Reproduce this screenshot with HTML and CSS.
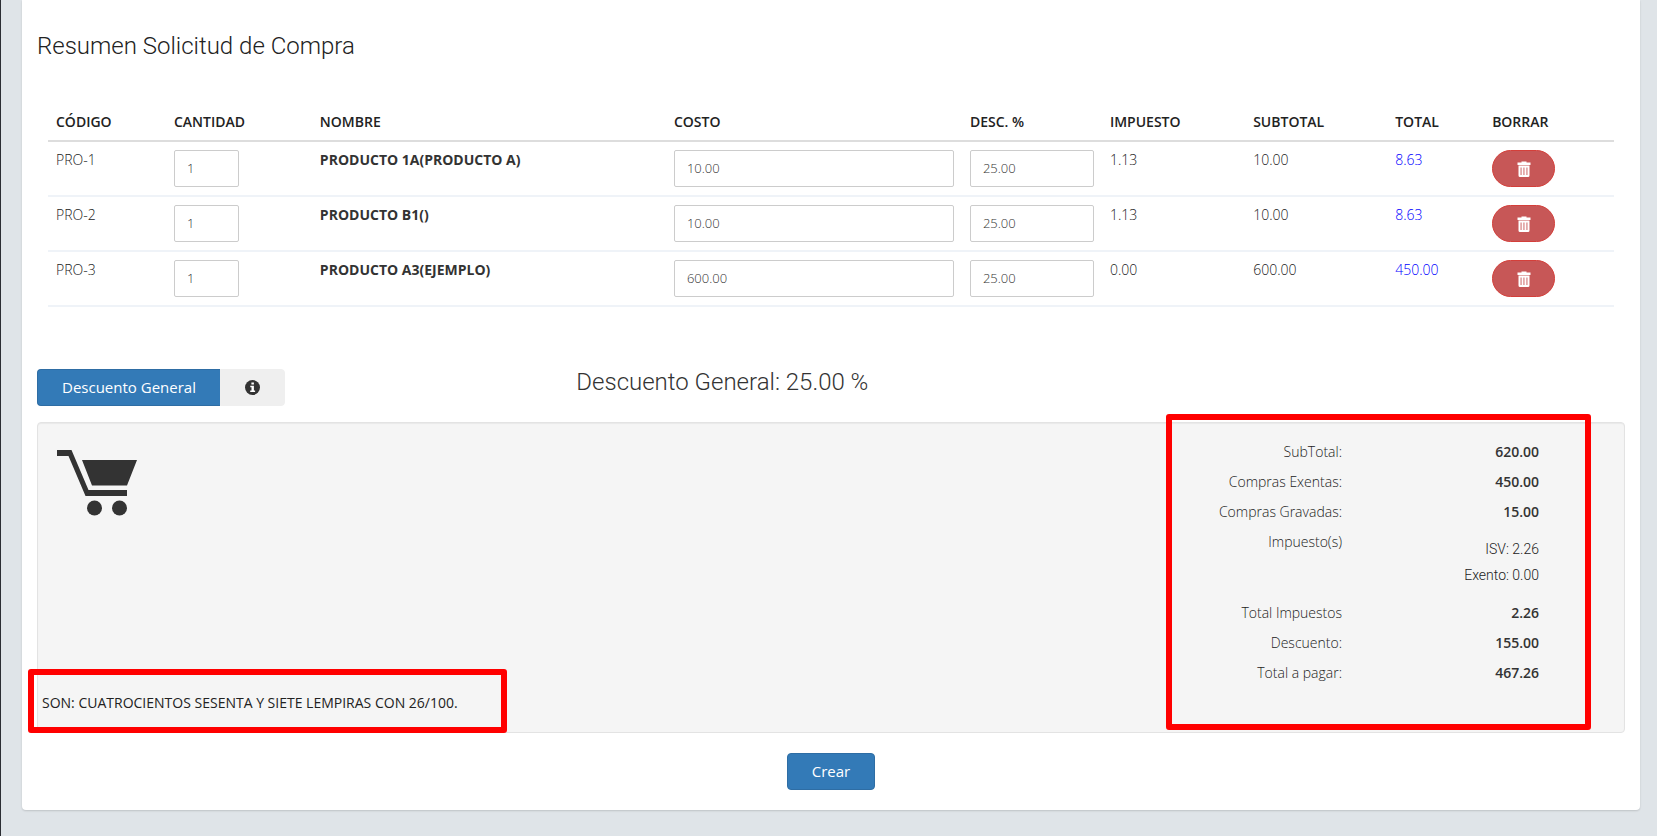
FILE: index.html
```html
<!DOCTYPE html>
<html lang="es">
<head>
<meta charset="utf-8">
<title>Resumen Solicitud de Compra</title>
<link rel="stylesheet" href="styles.css">
</head>
<body>
<svg class="sprite" aria-hidden="true">
  <symbol id="trash" viewBox="0 0 14 16">
    <path fill="currentColor" fill-rule="evenodd" d="M4.500 0.500h5v1h4v2.500h-13v-2.500h4zM1.500 4.600h11v9.900q0 1.500-1.500 1.500h-8q-1.500 0-1.500-1.500zM3.600 6.500v7.500h0.900v-7.500zM6.500 6.500v7.500h0.900v-7.500zM9.500 6.500v7.500h0.900v-7.500z"/>
  </symbol>
</svg>
<main class="card">
  <h1 class="title">Resumen Solicitud de Compra</h1>

  <div class="table-wrap">
    <table class="items">
      <colgroup>
        <col class="c-code"><col class="c-qty"><col class="c-name"><col class="c-cost"><col class="c-disc"><col class="c-tax"><col class="c-sub"><col class="c-total"><col class="c-del">
      </colgroup>
      <thead>
        <tr><th>CÓDIGO</th><th>CANTIDAD</th><th>NOMBRE</th><th>COSTO</th><th>DESC. %</th><th>IMPUESTO</th><th>SUBTOTAL</th><th>TOTAL</th><th>BORRAR</th></tr>
      </thead>
      <tbody>
        <tr>
          <td>PRO-1</td>
          <td><input class="field qty" type="text" value="1" aria-label="Cantidad PRO-1"></td>
          <td class="name">PRODUCTO 1A(PRODUCTO A)</td>
          <td><input class="field" type="text" value="10.00" aria-label="Costo PRO-1"></td>
          <td><input class="field" type="text" value="25.00" aria-label="Descuento PRO-1"></td>
          <td>1.13</td><td>10.00</td><td class="total">8.63</td>
          <td><button class="delete" type="button" aria-label="Borrar PRO-1"><svg><use href="#trash"/></svg></button></td>
        </tr>
        <tr>
          <td>PRO-2</td>
          <td><input class="field qty" type="text" value="1" aria-label="Cantidad PRO-2"></td>
          <td class="name">PRODUCTO B1()</td>
          <td><input class="field" type="text" value="10.00" aria-label="Costo PRO-2"></td>
          <td><input class="field" type="text" value="25.00" aria-label="Descuento PRO-2"></td>
          <td>1.13</td><td>10.00</td><td class="total">8.63</td>
          <td><button class="delete" type="button" aria-label="Borrar PRO-2"><svg><use href="#trash"/></svg></button></td>
        </tr>
        <tr>
          <td>PRO-3</td>
          <td><input class="field qty" type="text" value="1" aria-label="Cantidad PRO-3"></td>
          <td class="name">PRODUCTO A3(EJEMPLO)</td>
          <td><input class="field" type="text" value="600.00" aria-label="Costo PRO-3"></td>
          <td><input class="field" type="text" value="25.00" aria-label="Descuento PRO-3"></td>
          <td>0.00</td><td>600.00</td><td class="total">450.00</td>
          <td><button class="delete" type="button" aria-label="Borrar PRO-3"><svg><use href="#trash"/></svg></button></td>
        </tr>
      </tbody>
    </table>
  </div>

  <div class="discount">
    <div class="group">
      <button class="btn primary" type="button">Descuento General</button>
      <button class="btn info" type="button" aria-label="Información">
        <svg viewBox="0 0 15 15"><circle cx="7.500" cy="7.500" r="7.500" fill="#333"/><path fill="#fff" d="M6.400 2.500h2.500v2h-2.500zM5.300 5.800h3.600v4.700h1.200v1.500h-4.900v-1.500h1.300v-3.200h-1.200z"/></svg>
      </button>
    </div>
    <h2 class="discount-title">Descuento General: 25.00 %</h2>
  </div>

  <section class="summary">
    <div class="left">
      <svg class="cart" viewBox="0 0 80 66"><path fill="#333" d="M0 0h14.500l17 40h38.500v6h-41.500l-17-40h-11.500zM25 10h55l-10 25.500h-35z"/><circle cx="37.500" cy="58" r="7.500" fill="#333"/><circle cx="62.500" cy="58" r="7.500" fill="#333"/></svg>
      <p class="words">SON: CUATROCIENTOS SESENTA Y SIETE LEMPIRAS CON 26/100.</p>
    </div>
    <dl class="totals">
      <dt>SubTotal:</dt><dd>620.00</dd>
      <dt>Compras Exentas:</dt><dd>450.00</dd>
      <dt>Compras Gravadas:</dt><dd>15.00</dd>
      <dt>Impuesto(s)</dt><dd class="taxes"><span>ISV: 2.26</span><span>Exento: 0.00</span></dd>
      <dt>Total Impuestos</dt><dd>2.26</dd>
      <dt>Descuento:</dt><dd>155.00</dd>
      <dt>Total a pagar:</dt><dd>467.26</dd>
    </dl>
    <div class="mark mark-totals"></div>
    <div class="mark mark-words"></div>
  </section>

  <div class="actions"><button class="btn primary" type="submit">Crear</button></div>
</main>
</body>
</html>
```
FILE: styles.css
```css
* { box-sizing: border-box; }
body {
  margin: 0;
  min-height: 100vh;
  padding: 0 17px 26px 21px;
  border-left: 1px solid #2b2d33;
  background: #dfe4e8;
  color: #222;
  font: 300 14px/20px "Open Sans", "Noto Sans", sans-serif;
}
.sprite { position: absolute; width: 0; height: 0; }
.card {
  padding: 30px 15px 20px;
  background: #fff;
  border-radius: 0 0 4px 4px;
  box-shadow: 0 1px 2px rgba(0, 0, 0, .15);
}
.title, .discount-title {
  margin: 0;
  font: 300 24px/32px Roboto, sans-serif;
}
.table-wrap { padding: 42px 11px 0; }
.items { width: 100%; table-layout: fixed; border-collapse: separate; border-spacing: 0; }
.items th, .items td { padding: 8px; text-align: left; vertical-align: top; }
.items th { font-weight: 600; border-bottom: 2px solid #ddd; }
.items td { border-bottom: 2px solid #eff3f8; }
.items .name { font-weight: 700; color: #333; }
.items .total { color: #00f; }
.c-code { width: 7.53%; }
.c-qty { width: 9.32%; }
.c-name { width: 22.61%; }
.c-cost { width: 18.9%; }
.c-disc { width: 8.94%; }
.c-tax { width: 9.15%; }
.c-sub { width: 9.07%; }
.c-total { width: 6.19%; }
.c-del { width: 8.29%; }
.field {
  display: block;
  width: 100%;
  height: 37px;
  padding: 0 12px 2px;
  border: 1px solid #ccc;
  border-radius: 2px;
  background: #fff;
  color: #333;
  font: 300 13px/20px "Open Sans", sans-serif;
}
.qty { width: 65px; }
.delete {
  display: flex;
  align-items: center;
  justify-content: center;
  width: 63px;
  height: 37px;
  padding: 0;
  border: 1px solid #d43f3a;
  border-radius: 19px;
  background: #c75757;
  color: #fff;
}
.delete svg { width: 14px; height: 16px; }
.discount {
  display: grid;
  grid-template-columns: 1fr 2fr;
  column-gap: 15px;
  margin-top: 62px;
}
.group { display: flex; }
.btn {
  height: 37px;
  padding: 0 24px 2px;
  border: 1px solid #2e6da4;
  border-radius: 4px;
  font: 400 15px/20px "Open Sans", sans-serif;
}
.primary { background: #337ab7; color: #fff; }
.group .primary { border-right: 0; border-radius: 4px 0 0 4px; }
.info { display: flex; align-items: center; padding-bottom: 0; border-color: #efefef; border-radius: 0 4px 4px 0; background: #efefef; }
.info svg { width: 15px; height: 15px; }
.discount-title { line-height: 26px; color: #333; }
.summary {
  position: relative;
  display: flex;
  justify-content: space-between;
  margin-top: 16px;
  padding: 19px 85px 19px 4px;
  border: 1px solid #e3e3e3;
  border-radius: 4px;
  background: #f5f5f5;
  box-shadow: inset 0 1px 1px rgba(0, 0, 0, .05);
}
.left { display: flex; flex-direction: column; justify-content: space-between; }
.cart { width: 80px; height: 66px; margin: 8px 0 0 15px; }
.words { margin: 0; font-weight: 500; }
.totals {
  display: grid;
  grid-template-columns: 124px 197px;
  row-gap: 10px;
  margin: 0 0 30px;
  text-align: right;
}
.totals dt { white-space: nowrap; }
.totals dd { margin: 0; font-weight: 600; color: #333; }
.totals .taxes {
  display: flex;
  flex-direction: column;
  gap: 6px;
  padding: 7px 0 8px;
  font: 300 14px/20px Roboto, sans-serif;
  color: #222;
}
.mark { position: absolute; border: 6px solid #f00; border-radius: 3px; pointer-events: none; }
.mark-totals { top: -9px; right: 33px; width: 425px; height: 316px; }
.mark-words { bottom: -1px; left: -10px; width: 479px; height: 64px; }
.actions { display: flex; justify-content: center; padding-top: 20px; }
```
